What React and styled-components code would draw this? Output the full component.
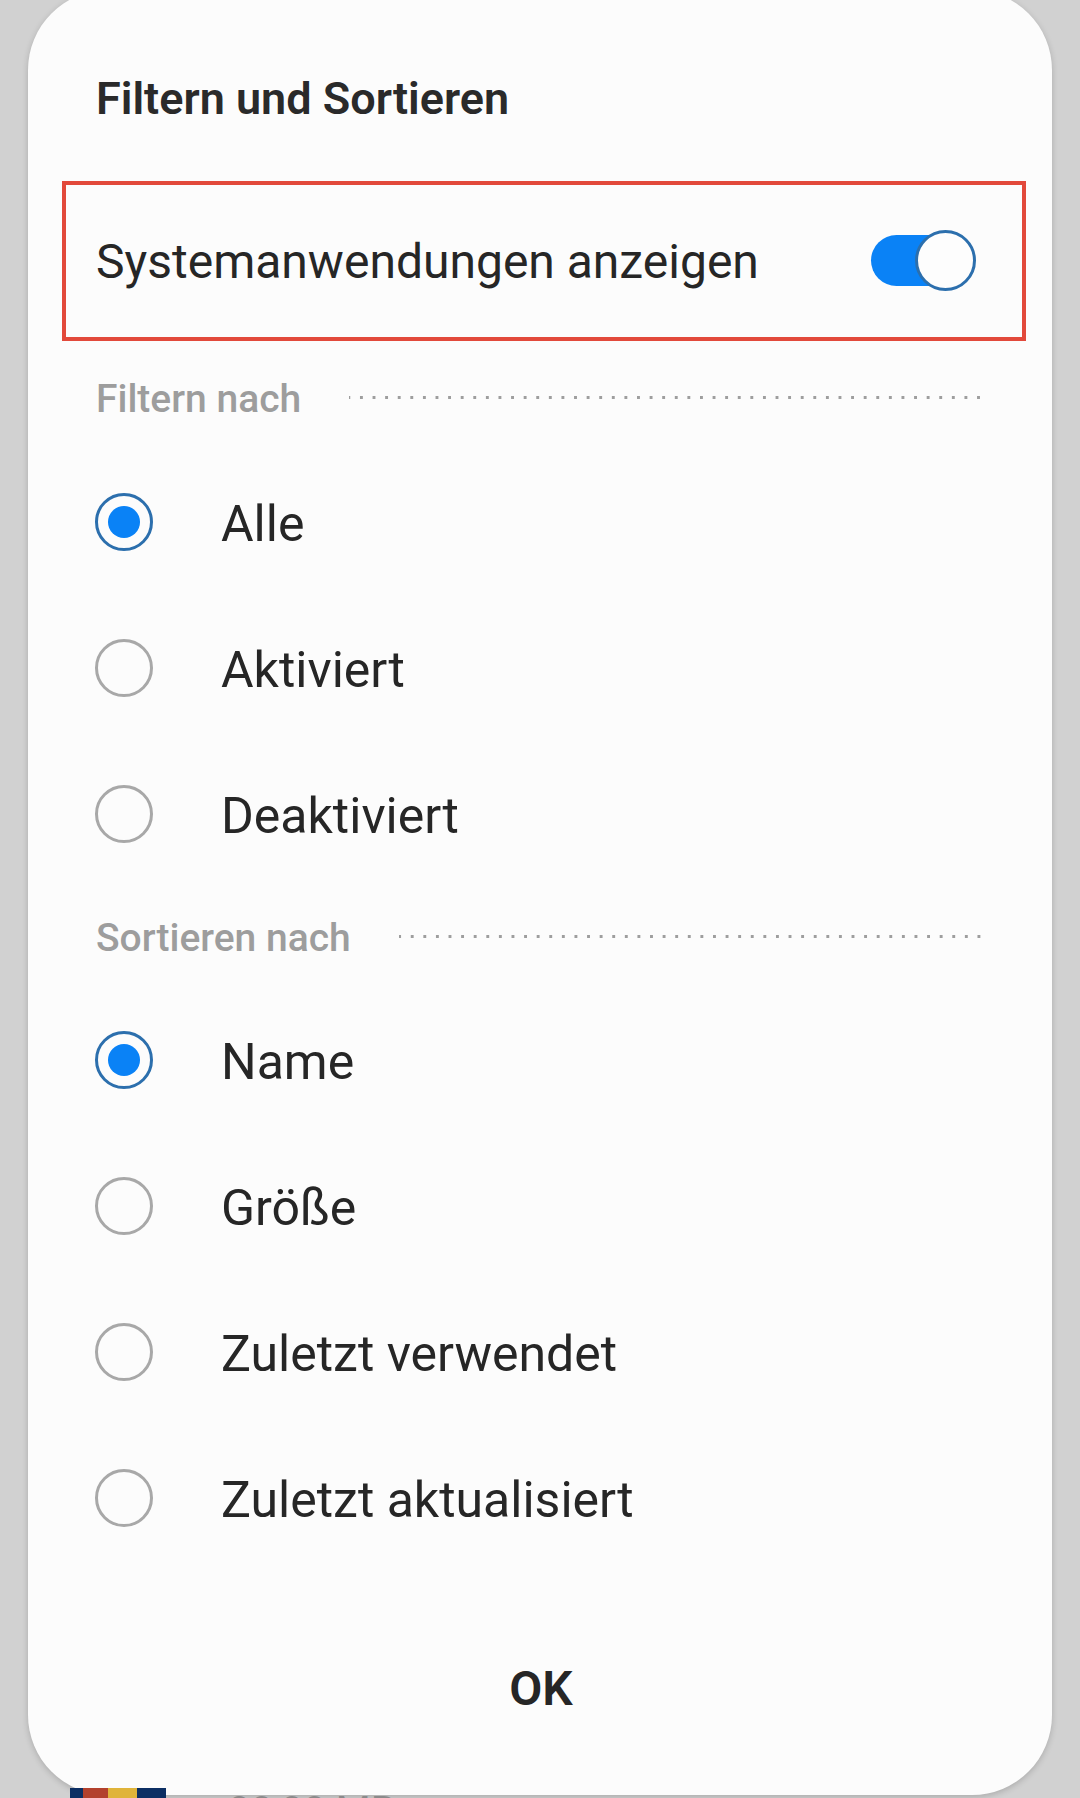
import React from 'react';
import styled, { createGlobalStyle } from 'styled-components';

const GlobalStyle = createGlobalStyle`
	html, body {
		margin: 0;
		padding: 0;
		background: #d1d1d1;
		font-family: Roboto, 'Noto Sans', 'Liberation Sans', sans-serif;
		color: #262626;
	}
	body {
		height: 1798px;
		overflow: hidden;
	}
`;

const StyledScreen = styled.div`
	width: 1080px;
	height: 1798px;
	overflow: hidden;
	background: #d1d1d1;
`;

const StyledDialog = styled.div`
	margin: -10px 0 0 28px;
	width: 1024px;
	height: 1805px;
	box-sizing: border-box;
	padding: 0 26px 0 34px;
	background: #fcfcfc;
	border-radius: 80px;
	box-shadow: 0 2px 6px rgba(0, 0, 0, 0.18);
	display: flex;
	flex-direction: column;
`;

const StyledTitle = styled.h1`
	margin: 81px 0 0;
	padding-left: 34px;
	font-size: 45px;
	line-height: 56px;
	font-weight: 600;
	color: #2a2a2a;
`;

const StyledHighlight = styled.div`
	margin-top: 54px;
	height: 160px;
	box-sizing: border-box;
	border: 4px solid #e2493b;
	padding: 0 46px 0 30px;
	display: flex;
	align-items: center;
	justify-content: space-between;
`;

const StyledSwitchLabel = styled.span`
	font-size: 48px;
	line-height: 60px;
	color: #262626;
	margin-top: 2px;
`;

const StyledSwitch = styled.div`
	position: relative;
	width: 105px;
	height: 61px;
	margin-top: -2px;
`;

const StyledTrack = styled.div`
	position: absolute;
	left: 0;
	top: 5px;
	width: 90px;
	height: 51px;
	border-radius: 26px;
	background: #0a82f6;
`;

const StyledThumb = styled.div`
	position: absolute;
	right: 0;
	top: 0;
	width: 61px;
	height: 61px;
	box-sizing: border-box;
	border-radius: 50%;
	background: #fdfdfd;
	border: 3px solid #2c6fad;
`;

const StyledSectionHeader = styled.div`
	margin-top: ${(p) => p.gap}px;
	padding: 0 41px 0 34px;
	height: 48px;
	display: flex;
	align-items: center;
	gap: 48px;
`;

const StyledSectionTitle = styled.span`
	font-size: 39px;
	line-height: 48px;
	font-weight: 500;
	color: #9d9d9d;
	white-space: nowrap;
`;

const StyledDots = styled.div`
	flex: 1;
	height: 3px;
	margin-top: -4px;
	background-image: radial-gradient(circle, #9e9e9e 1.4px, transparent 1.8px);
	background-size: 12.6px 3px;
	background-repeat: repeat-x;
	background-position: right center;
`;

const StyledOptions = styled.div`
	margin-top: ${(p) => p.gap}px;
	display: flex;
	flex-direction: column;
`;

const StyledOption = styled.div`
	height: 146px;
	padding-left: 33px;
	display: flex;
	align-items: center;
	gap: 68px;
`;

const StyledRadio = styled.div`
	width: 58px;
	height: 58px;
	box-sizing: border-box;
	border-radius: 50%;
	border: 3px solid ${(p) => (p.checked ? '#2c6fad' : '#a8a8a8')};
	display: flex;
	align-items: center;
	justify-content: center;
	&::after {
		content: '';
		display: ${(p) => (p.checked ? 'block' : 'none')};
		width: 32px;
		height: 32px;
		border-radius: 50%;
		background: #0a82f6;
	}
`;

const StyledOptionLabel = styled.span`
	font-size: 50px;
	line-height: 60px;
	color: #262626;
	margin-top: 4px;
`;

const StyledFooter = styled.div`
	margin-top: 88px;
	display: flex;
	justify-content: center;
`;

const StyledOkButton = styled.button`
	border: none;
	background: transparent;
	padding: 0;
	font-family: inherit;
	font-size: 48px;
	line-height: 60px;
	font-weight: 600;
	color: #262626;
	margin-left: -6px;
`;

const StyledPeekRow = styled.div`
	display: flex;
	align-items: flex-start;
	gap: 62px;
	padding-left: 70px;
	margin-top: -7px;
`;

const StyledPeekIcon = styled.div`
	width: 96px;
	height: 96px;
	background: linear-gradient(90deg, #0c2f63 0 14%, #b3412d 14% 40%, #e0b43a 40% 70%, #0c2f63 70%);
`;

const StyledPeekText = styled.span`
	font-size: 40px;
	line-height: 48px;
	color: #8a8a8a;
`;

const filterOptions = ['Alle', 'Aktiviert', 'Deaktiviert'];
const sortOptions = ['Name', 'Größe', 'Zuletzt verwendet', 'Zuletzt aktualisiert'];

const App = () => {
	return (
		<>
			<GlobalStyle />
			<StyledScreen>
				<StyledDialog>
					<StyledTitle>Filtern und Sortieren</StyledTitle>
					<StyledHighlight>
						<StyledSwitchLabel>Systemanwendungen anzeigen</StyledSwitchLabel>
						<StyledSwitch>
							<StyledTrack />
							<StyledThumb />
						</StyledSwitch>
					</StyledHighlight>

					<StyledSectionHeader gap={34}>
						<StyledSectionTitle>Filtern nach</StyledSectionTitle>
						<StyledDots />
					</StyledSectionHeader>
					<StyledOptions gap={26}>
						{filterOptions.map((label, i) => (
							<StyledOption key={label}>
								<StyledRadio checked={i === 0} />
								<StyledOptionLabel>{label}</StyledOptionLabel>
							</StyledOption>
						))}
					</StyledOptions>

					<StyledSectionHeader gap={27}>
						<StyledSectionTitle>Sortieren nach</StyledSectionTitle>
						<StyledDots />
					</StyledSectionHeader>
					<StyledOptions gap={25}>
						{sortOptions.map((label, i) => (
							<StyledOption key={label}>
								<StyledRadio checked={i === 0} />
								<StyledOptionLabel>{label}</StyledOptionLabel>
							</StyledOption>
						))}
					</StyledOptions>

					<StyledFooter>
						<StyledOkButton>OK</StyledOkButton>
					</StyledFooter>
				</StyledDialog>
				<StyledPeekRow>
					<StyledPeekIcon />
					<StyledPeekText>80,00 MB</StyledPeekText>
				</StyledPeekRow>
			</StyledScreen>
		</>
	);
};

export default App;
